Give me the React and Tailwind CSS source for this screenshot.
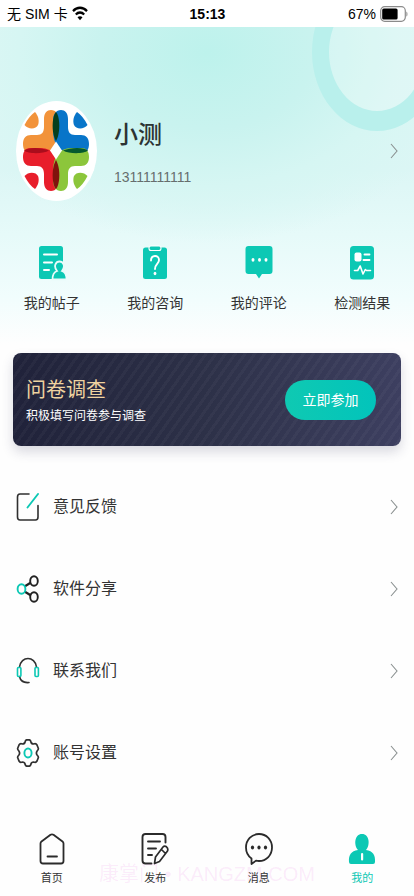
import React from "react";

const teal = "#0cc8b4";

function WifiIcon() {
  return (
    <svg className="h-[15px] w-4" viewBox="0 0 16 14" preserveAspectRatio="none" fill="none" stroke="#000" strokeWidth="2.2" aria-hidden="true">
      <path d="M1 4.8C5 .6 11 .6 15 4.8" />
      <path d="M3.8 7.9c2.4-2.5 6-2.5 8.4 0" />
      <path d="M8 13.2 5.5 10.6c1.4-1.4 3.6-1.4 5 0z" fill="#000" stroke="none" />
    </svg>
  );
}

function BatteryIcon() {
  return (
    <svg className="h-4 w-7" viewBox="0 0 28 16" fill="none" aria-hidden="true">
      <rect x=".7" y=".7" width="24.6" height="14.6" rx="4" stroke="#8b8b8b" strokeWidth="1.2" />
      <rect x="2.2" y="2.4" width="15.4" height="11.2" rx="1.6" fill="#000" />
      <path d="M26.4 5.4c1.4.8 1.4 4.4 0 5.2z" fill="#8b8b8b" />
    </svg>
  );
}

function Chevron() {
  return (
    <svg className="h-4 w-2 shrink-0" viewBox="0 0 8 16" fill="none" stroke="#8a9090" strokeWidth="1.1" aria-hidden="true">
      <path d="M1 1l6 7-6 7" />
    </svg>
  );
}

function Avatar() {
  return (
    <svg className="h-[100px] w-[81px] shrink-0" viewBox="0 0 81 100" role="img" aria-label="头像">
      <defs>
        <path id="arm" d="M28 18C28 12 31 9 35 9C40 9 43 13 43 20V29C43 43 37 52 25 52H14C9 52 7 48 7 43C7 37 10 34 15 34H21C26 34 28 31 28 26Z" />
        <path id="drop" d="M8.500 24Q13 15 19 11C22.500 15 23.500 20 22 24C20 28.500 12 28.500 8.500 24Z" />
      </defs>
      <ellipse cx="40.5" cy="50" rx="40.5" ry="50" fill="#fff" />
      <use href="#arm" fill="#f2933a" />
      <use href="#arm" fill="#0875c9" transform="matrix(-1 0 0 1 80 0)" />
      <use href="#arm" fill="#e81e2b" transform="matrix(1 0 0 -1 0 99)" />
      <use href="#arm" fill="#8cc63b" transform="matrix(-1 0 0 -1 80 99)" />
      <path d="M40 11C36.300 15 36 27 37.500 33C38 36 39 38 40 40C41 38 42 36 42.500 33C44 27 43.700 15 40 11Z" fill="#063f1c" />
      <path d="M40 88C36.300 84 36 72 37.500 66C38 63 39 61 40 59C41 61 42 63 42.500 66C44 72 43.700 84 40 88Z" fill="#80130d" />
      <path d="M8 49.500C12 46 25 46 33 49.500C27 53 12 53 8 49.500Z" fill="#ab0d1c" />
      <path d="M72 49.500C68 46 55 46 47 49.500C53 53 68 53 72 49.500Z" fill="#04592f" />
      <path d="M40 40.500L46 49.500L40 58.500L34 49.500Z" fill="#fff" />
      <use href="#drop" fill="#f2933a" />
      <use href="#drop" fill="#0875c9" transform="matrix(-1 0 0 1 80 0)" />
      <use href="#drop" fill="#e81e2b" transform="matrix(1 0 0 -1 0 99)" />
      <use href="#drop" fill="#8cc63b" transform="matrix(-1 0 0 -1 80 99)" />
    </svg>
  );
}

function PostsIcon() {
  return (
    <svg className="h-9 w-7" viewBox="0 0 28 36" aria-hidden="true">
      <rect x="1" y="1" width="24" height="33" rx="2.500" fill={teal} />
      <path d="M6 9.500h13M6 17.500h8M6 25h5" stroke="#fff" strokeWidth="2" strokeLinecap="round" />
      <path d="M14.500 34.500c0-5 1.500-7.500 4.500-8.500-4-5-1-9.500 2.500-9.500s6.500 4.500 2.500 9.500c3 1 4.500 3.500 4.500 8.500z" fill={teal} stroke="#eafbfa" strokeWidth="1.800" />
    </svg>
  );
}

function ConsultIcon() {
  return (
    <svg className="h-9 w-7" viewBox="0 0 28 36" aria-hidden="true">
      <rect x="2" y="2.500" width="24" height="31.500" rx="2.500" fill={teal} />
      <rect x="8" y="1" width="12" height="4.500" rx="2" fill={teal} stroke="#fff" strokeWidth="1.100" />
      <path d="M10 15.500c0-6 8-6 8-.5 0 4-4 4-4 9" fill="none" stroke="#fff" strokeWidth="1.900" strokeLinecap="round" />
      <ellipse cx="14" cy="28.500" rx="1.400" ry="1.700" fill="#fff" />
    </svg>
  );
}

function CommentIcon() {
  return (
    <svg className="h-9 w-7" viewBox="0 0 28 36" aria-hidden="true">
      <path d="M3.500 1h21q3 0 3 3v22q0 3-3 3h-7.500l-3 4.500-3-4.500h-7.500q-3 0-3-3v-22q0-3 3-3z" fill={teal} />
      <g fill="#fff">
        <ellipse cx="8" cy="14.800" rx="1.500" ry="1.900" />
        <ellipse cx="14.500" cy="14.800" rx="1.500" ry="1.900" />
        <ellipse cx="21" cy="14.800" rx="1.500" ry="1.900" />
      </g>
    </svg>
  );
}

function ResultIcon() {
  return (
    <svg className="h-9 w-7" viewBox="0 0 28 36" aria-hidden="true">
      <rect x="2" y="1" width="24" height="33.500" rx="3.500" fill={teal} />
      <rect x="6.500" y="7.500" width="7" height="9" rx="2" fill="#fff" />
      <path d="M16.500 9.500h5M15.500 15h6" stroke="#fff" strokeWidth="1.900" strokeLinecap="round" />
      <path d="M6.500 25.500h3.200l2.500-4.500 2.800 8 2.300-4.500 1.200 1h4" fill="none" stroke="#fff" strokeWidth="1.600" strokeLinecap="round" strokeLinejoin="round" />
    </svg>
  );
}

function FeedbackIcon() {
  return (
    <svg className="h-7 w-6" viewBox="0 0 24 28" fill="none" strokeWidth="1.600" strokeLinecap="round" aria-hidden="true">
      <path d="M13 1H4Q1.500 1 1.500 4V24Q1.500 27 4 27H19.500Q22 27 22 24V12.500" stroke="#303030" />
      <path d="M11.500 14.500L22 1" stroke={teal} strokeWidth="1.900" />
    </svg>
  );
}

function ShareIcon() {
  return (
    <svg className="h-7 w-6" viewBox="0 0 24 28" fill="none" strokeWidth="1.900" aria-hidden="true">
      <path d="M8.500 11.500L15 7.500M8.500 16.500L15 20.500" stroke="#222" strokeWidth="2.200" />
      <ellipse cx="18" cy="6" rx="3.800" ry="4.800" stroke="#222" />
      <ellipse cx="18" cy="22" rx="3.800" ry="4.800" stroke="#222" />
      <ellipse cx="5.500" cy="14" rx="3.900" ry="4.800" stroke={teal} />
    </svg>
  );
}

function ContactIcon() {
  return (
    <svg className="h-7 w-6" viewBox="0 0 24 28" fill="none" strokeWidth="1.600" strokeLinecap="round" aria-hidden="true">
      <path d="M3.500 10C5 -1.300 19 -1.300 20.500 10M3.500 19.500C4.500 24 8 26 13 25.500" stroke="#303030" />
      <rect x="1.500" y="10.500" width="3.400" height="9" rx="1" stroke={teal} />
      <rect x="19" y="10.500" width="3.400" height="9" rx="1" stroke={teal} />
    </svg>
  );
}

function SettingsIcon() {
  return (
    <svg className="h-7 w-6" viewBox="0 0 24 28" fill="none" strokeWidth="1.700" strokeLinejoin="round" aria-hidden="true">
      <path d="M9.200 2.500Q9.500 .8 11 .8H13Q14.500 .8 14.800 2.500Q15.300 5 17.500 5Q20 4 21 6L22.200 9Q22.800 10.500 21.300 11.700Q19.500 14 21.300 16.300Q22.800 17.500 22.200 19L21 22Q20 24 17.500 23Q15.300 23 14.800 25.500Q14.500 27.200 13 27.200H11Q9.500 27.200 9.200 25.500Q8.700 23 6.500 23Q4 24 3 22L1.800 19Q1.200 17.500 2.700 16.300Q4.500 14 2.700 11.700Q1.200 10.500 1.800 9L3 6Q4 4 6.500 5Q8.700 5 9.200 2.500Z" stroke="#303030" />
      <ellipse cx="12" cy="14" rx="3.600" ry="4.500" stroke={teal} strokeWidth="1.900" />
    </svg>
  );
}

function HomeIcon() {
  return (
    <svg className="h-8 w-7" viewBox="0 0 28 32" fill="none" stroke="#2b2b2b" strokeWidth="1.800" strokeLinecap="round" strokeLinejoin="round" aria-hidden="true">
      <path d="M12.500 1.800Q14 .8 15.500 1.800L24.500 8.500Q25.500 9.300 25.500 10.500V28Q25.500 30.500 23 30.500H5Q2.500 30.500 2.500 28V10.500Q2.500 9.300 3.500 8.500Z" />
      <path d="M9.500 23.500h9.500" />
    </svg>
  );
}

function PublishIcon() {
  return (
    <svg className="h-8 w-7" viewBox="0 0 28 32" fill="none" stroke="#2b2b2b" strokeWidth="1.900" strokeLinecap="round" strokeLinejoin="round" aria-hidden="true">
      <path d="M10.500 30.500H4.500Q1.500 30.500 1.500 27.500V4Q1.500 1 4.500 1H21.500Q24.500 1 24.500 4V9.500" />
      <path d="M7 8.500h12M7 15.500h8M7 22h4" />
      <path d="M13.500 30.500L14.500 24L22 14Q23.500 12.300 25.500 13.800Q27.500 15.500 26.500 18L18.500 28.500ZM20.500 16.500l4 4" strokeWidth="1.700" />
    </svg>
  );
}

function MessageIcon() {
  return (
    <svg className="h-8 w-7" viewBox="0 0 28 32" fill="none" stroke="#2b2b2b" strokeWidth="1.800" strokeLinejoin="round" aria-hidden="true">
      <path d="M6.500 31V25.500C3 23 1 19 1 14.500C1 7 6.500 1 14 1S27 7 27 14.500S21.500 28 14 28Q12.500 28 11 27.600Z" />
      <g fill="#2b2b2b" stroke="none">
        <ellipse cx="7.500" cy="14.500" rx="1.600" ry="1.900" />
        <ellipse cx="14" cy="14.500" rx="1.600" ry="1.900" />
        <ellipse cx="20.500" cy="14.500" rx="1.600" ry="1.900" />
      </g>
    </svg>
  );
}

function MineIcon() {
  return (
    <svg className="h-8 w-7" viewBox="0 0 28 32" aria-hidden="true">
      <path d="M10 17C5.500 12 6.500 1 14 1S22.500 12 18 17C25 18 27.500 22 27 29Q27 31 25 31H3Q1 31 1 29C.500 22 3 18 10 17Z" fill={teal} />
      <rect x="13" y="20" width="2.200" height="7.500" rx="1.100" fill="#fff" />
    </svg>
  );
}

const shortcuts = [
  { label: "我的帖子", Icon: PostsIcon },
  { label: "我的咨询", Icon: ConsultIcon },
  { label: "我的评论", Icon: CommentIcon },
  { label: "检测结果", Icon: ResultIcon },
];

const menu = [
  { label: "意见反馈", Icon: FeedbackIcon },
  { label: "软件分享", Icon: ShareIcon },
  { label: "联系我们", Icon: ContactIcon },
  { label: "账号设置", Icon: SettingsIcon },
];

const tabs = [
  { label: "首页", Icon: HomeIcon },
  { label: "发布", Icon: PublishIcon },
  { label: "消息", Icon: MessageIcon },
  { label: "我的", Icon: MineIcon, active: true },
];

export default function App() {
  return (
    <div className="relative flex min-h-screen flex-col bg-[#fefefe] font-['Liberation_Sans','Noto_Sans_CJK_SC',sans-serif] text-[#333]">
      <div className="grid h-[27px] grid-cols-3 items-center bg-white pl-[7px] pr-[6px] text-sm text-black">
        <div className="flex items-center gap-1 whitespace-nowrap">
          <span>无 SIM 卡</span>
          <WifiIcon />
        </div>
        <div className="text-center font-bold">15:13</div>
        <div className="flex items-center justify-end gap-1">
          <span>67%</span>
          <BatteryIcon />
        </div>
      </div>

      <header className="relative overflow-hidden bg-[radial-gradient(ellipse_65%_60%_at_50%_8%,#bdf2ec_0%,#c9f3ef_40%,#d6f6f3_70%,transparent_100%),linear-gradient(180deg,#e0f7f5_0%,#dcf6f5_45%,#e6faf9_65%,#f1fdfd_85%,#fefefe_100%)] pb-8 pt-[74px]">
        <div className="absolute -right-7 -top-[54px] h-[158px] w-[130px] rounded-[50%] border-x-[17px] border-y-[20px] border-[#b9f0ec] bg-white/20" />
        <button type="button" className="relative flex w-full items-center pl-4 pr-4 text-left">
          <Avatar />
          <span className="ml-[17px] flex flex-1 flex-col gap-4 pt-1">
            <span className="text-2xl font-medium leading-8 text-[#2c3333]">小测</span>
            <span className="text-sm leading-5 text-[#666e6e]">13111111111</span>
          </span>
          <Chevron />
        </button>
        <nav className="relative mt-11 grid grid-cols-4">
          {shortcuts.map(({ label, Icon }) => (
            <button key={label} type="button" className="flex flex-col items-center gap-3 text-sm leading-5">
              <Icon />
              {label}
            </button>
          ))}
        </nav>
      </header>

      <main className="flex flex-col">
        <section className="mx-[13px] mt-2 flex h-[93px] items-center justify-between rounded-lg bg-[repeating-linear-gradient(125deg,transparent_0px,transparent_5px,rgba(255,255,255,0.03)_5px,rgba(255,255,255,0.03)_8px),linear-gradient(90deg,#20223a_0%,#2d3148_50%,#3d3f60_100%)] pl-[13px] pr-[25px] shadow-[0_6px_12px_rgba(50,50,90,0.18)]">
          <div className="pt-1">
            <h2 className="text-xl leading-7 text-[#efd3a0]">问卷调查</h2>
            <p className="text-xs leading-6 text-white">积极填写问卷参与调查</p>
          </div>
          <button type="button" className="h-10 w-[91px] rounded-full bg-gradient-to-r from-[#0fc9b2] to-[#02c4bb] text-sm text-white">立即参加</button>
        </section>

        <ul className="mt-5">
          {menu.map(({ label, Icon }) => (
            <li key={label}>
              <button type="button" className="flex h-[82px] w-full items-center pl-4 pr-4 text-left text-base">
                <Icon />
                <span className="ml-[13px] flex-1">{label}</span>
                <Chevron />
              </button>
            </li>
          ))}
        </ul>
      </main>

      <nav className="mt-auto grid grid-cols-4 pb-[10px]">
        {tabs.map(({ label, Icon, active }) => (
          <a key={label} href="#" className={active ? "flex flex-col items-center gap-[5px] text-[11px] leading-4 text-[#0cc8b4]" : "flex flex-col items-center gap-[5px] text-[11px] leading-4 text-[#333]"}>
            <Icon />
            {label}
          </a>
        ))}
      </nav>

      <div className="pointer-events-none absolute inset-x-0 bottom-2 whitespace-nowrap text-center text-xl leading-7 text-[#e040d8]/10">康掌门 • KANGZM.COM</div>
    </div>
  );
}
